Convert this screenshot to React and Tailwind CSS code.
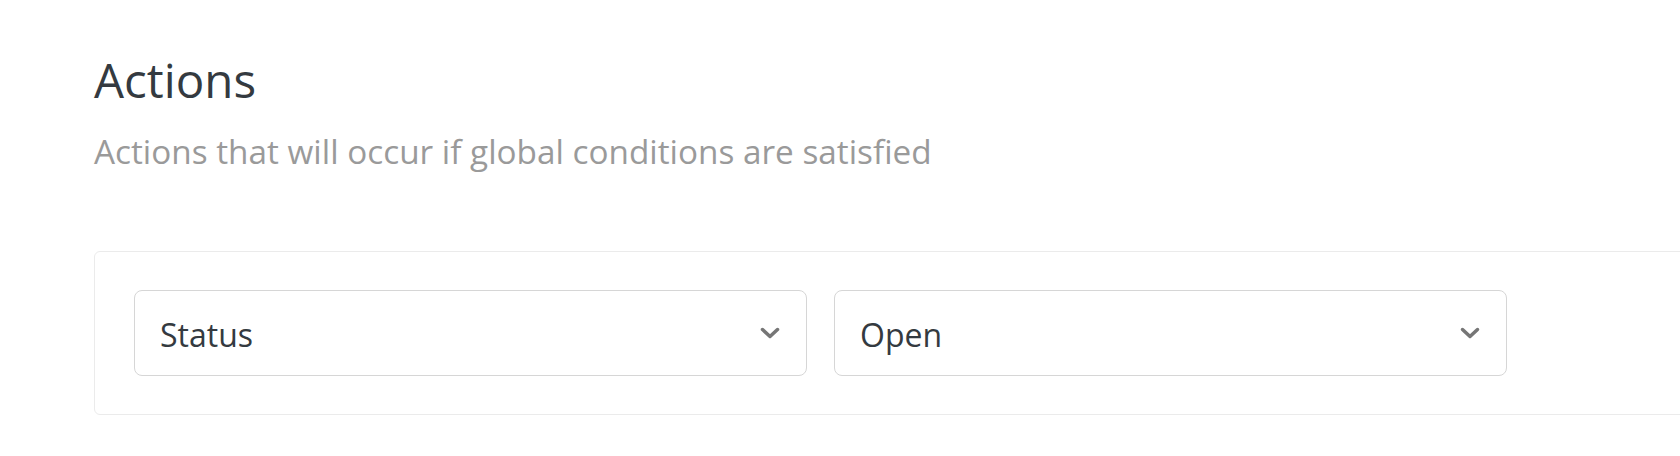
import { useState } from "react";

function Chevron() {
  return (
    <svg width="20" height="12" viewBox="0 0 20 12" fill="none" className="shrink-0">
      <path
        d="M2.5 2.5 L10 9.5 L17.5 2.5"
        stroke="#767676"
        strokeWidth="3.5"
        strokeLinecap="round"
        strokeLinejoin="round"
      />
    </svg>
  );
}

function SelectBox({ value }) {
  return (
    <button
      type="button"
      className="w-[673px] h-[86px] shrink-0 flex items-center justify-between pl-[25px] pr-[26px] bg-white border border-[#d6d6d6] rounded-lg text-left"
    >
      <span className="pt-[4px] text-[32px] leading-[40px] text-[#343a40]">{value}</span>
      <Chevron />
    </button>
  );
}

export default function App() {
  const [field] = useState("Status");
  const [state] = useState("Open");

  return (
    <div className="w-full h-[456px] overflow-hidden bg-white font-['Open_Sans',sans-serif]">
      <div className="pt-[52px] pl-[94px]">
        <h1 className="text-[47.5px] leading-[55px] font-normal text-[#343a40]">Actions</h1>
        <p className="mt-[20px] text-[33.3px] leading-[48px] text-[#9a9a9a]">
          Actions that will occur if global conditions are satisfied
        </p>

        {/* card runs past the right edge */}
        <div className="mt-[76px] w-[1640px] border border-[#ebebeb] rounded-md px-[39px] py-[38px]">
          <div className="flex gap-[27px]">
            <SelectBox value={field} />
            <SelectBox value={state} />
          </div>
        </div>
      </div>
    </div>
  );
}
